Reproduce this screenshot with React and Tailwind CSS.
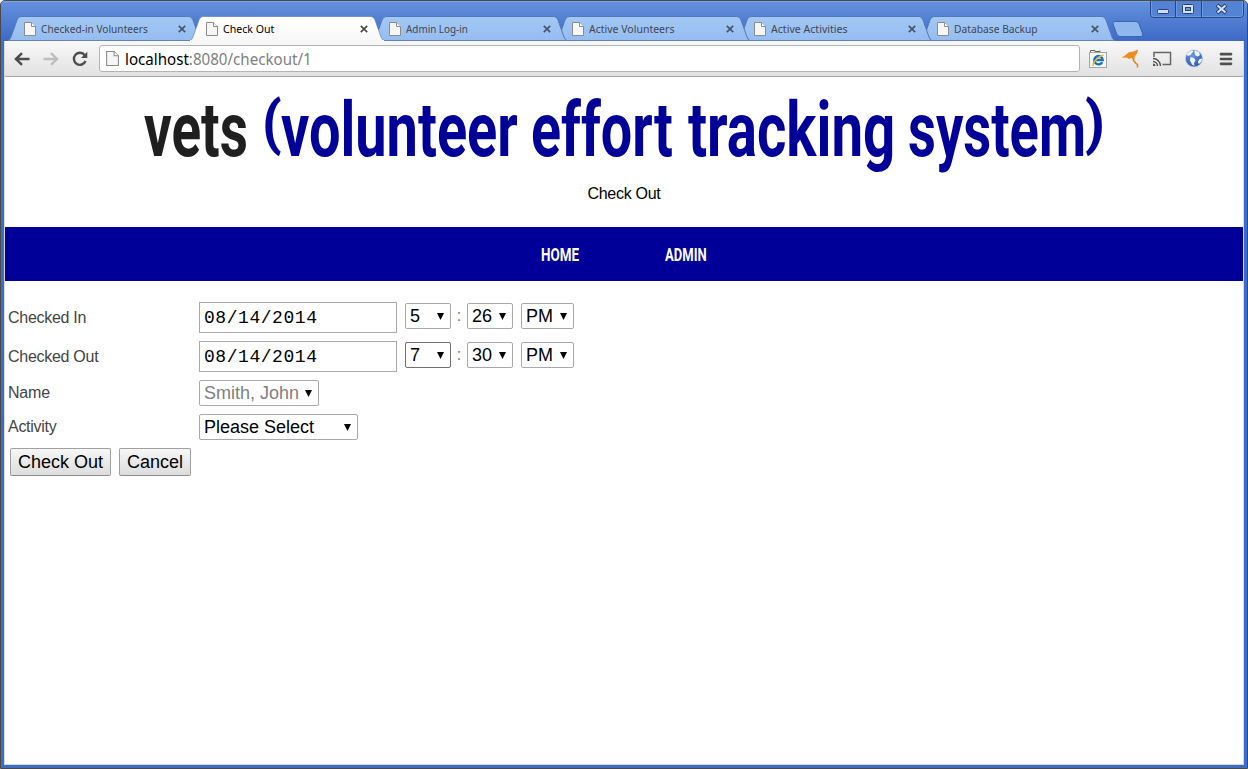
import { useLayoutEffect, useRef, useState } from "react";

// Condenses or widens a line of text so that it fills the width of its box.
function Fit({ className = "", children }) {
  const box = useRef(null);
  const text = useRef(null);
  const [scale, setScale] = useState(1);
  useLayoutEffect(() => {
    setScale(box.current.clientWidth / text.current.offsetWidth);
  }, []);
  return (
    <span ref={box} className={`block shrink-0 ${className}`}>
      <span ref={text} className="inline-block origin-left whitespace-nowrap" style={{ transform: `scaleX(${scale})` }}>
        {children}
      </span>
    </span>
  );
}

function PageIcon({ className = "" }) {
  return (
    <svg viewBox="0 0 12 14" className={`block shrink-0 ${className}`}>
      <path d="M.5.5h7l4 4v9H.5z" fill="#f6f6f6" stroke="#8b8b8b" />
      <path d="M7.5.5v4h4" fill="#fff" stroke="#8b8b8b" />
    </svg>
  );
}

const tabs = [
  { title: "Checked-in Volunteers", width: "w-[107px]", layer: "z-[6]" },
  { title: "Check Out", width: "w-[51px]", layer: "z-[10]", active: true },
  { title: "Admin Log-in", width: "w-[62px]", layer: "z-[5]" },
  { title: "Active Volunteers", width: "w-[85px]", layer: "z-[4]" },
  { title: "Active Activities", width: "w-[77px]", layer: "z-[3]" },
  { title: "Database Backup", width: "w-[84px]", layer: "z-[2]" },
];

function Tab({ title, width, layer, active }) {
  return (
    <div className={`relative -mr-[11.3px] grid h-[25px] w-[194px] shrink-0 ${layer}`}>
      <svg viewBox="0 0 194 25" className="col-start-1 row-start-1 h-[25px] w-[194px]">
        <defs>
          <linearGradient id="tabFill" x1="0" y1="0" x2="0" y2="1">
            <stop offset="0" stopColor="#a3c8f5" />
            <stop offset="1" stopColor="#96bcf0" />
          </linearGradient>
          <linearGradient id="tabActive" x1="0" y1="0" x2="0" y2="1">
            <stop offset="0" stopColor="#ffffff" />
            <stop offset="1" stopColor="#f8f8f8" />
          </linearGradient>
        </defs>
        <path
          d="M0 24.5Q2 24 3 21L9 4Q10.300 .5 13 .5H181Q183.500 .5 185 4L191 21Q192 24 194 24.500"
          fill={active ? "url(#tabActive)" : "url(#tabFill)"}
          stroke={active ? "#5575b0" : "#5478b8"}
          strokeWidth={active ? ".6" : "1"}
        />
        {active ? <path d="M0 24.5H194" stroke="#f8f8f8" /> : <path d="M0 24.500H194" stroke="#6385bd" />}
      </svg>
      <div className="col-start-1 row-start-1 flex items-center pl-4">
        <PageIcon className="h-[14px] w-[12px]" />
        <Fit className={`ml-[5px] font-['Noto_Sans',sans-serif] text-[11px] leading-[16px] ${width} ${active ? "text-black" : "text-[#404754]"}`}>
          {title}
        </Fit>
        <svg viewBox="0 0 8 8" className="mr-4 ml-auto size-2">
          <path d="M.8.8l6.400 6.400M7.200.8L.8 7.200" stroke={active ? "#4b4b4b" : "#46546a"} strokeWidth="1.700" />
        </svg>
      </div>
    </div>
  );
}

function WindowButtons() {
  return (
    <svg viewBox="0 0 94 18" className="h-[18px] w-[94px]">
      <path d="M.5 0V14Q.5 17.500 4 17.500H90Q93.500 17.500 93.500 14V0" fill="#5583d4" stroke="#24468d" />
      <path d="M1.500 1V14Q1.500 16.500 4 16.500H90Q92.500 16.500 92.500 14V1" fill="none" stroke="#7ba4e8" strokeWidth=".7" />
      <path d="M25.500 0V17M51.500 0V17" stroke="#24468d" />
      <path d="M26.500 1V16.500M52.500 1V16.500" stroke="#7ba4e8" strokeWidth=".6" />
      <rect x="7.500" y="9.500" width="11" height="4" rx="1" fill="#cfddf7" stroke="#24427f" />
      <rect x="32.500" y="4.500" width="11" height="9" rx="1" fill="#d5e2f8" stroke="#24427f" />
      <rect x="35.500" y="7.500" width="5" height="3" fill="#6d94dc" stroke="#24427f" />
      <path d="M67 5l9 8M76 5l-9 8" stroke="#24427f" strokeWidth="4" />
      <path d="M67.500 5.500l8 7M75.500 5.500l-8 7" stroke="#d5e2f8" strokeWidth="2" />
    </svg>
  );
}

function Toolbar() {
  return (
    <div className="flex h-9 shrink-0 items-center rounded-t-[3px] border-b border-[#a5a5a5] bg-linear-to-b from-[#f8f8f8] to-[#e2e2e2] pl-[9px]">
      <svg viewBox="0 0 16 14" className="h-[14px] w-4">
        <path d="M15.500 7H2.500M8 1.200L2 7l6 5.800" fill="none" stroke="#4d4d4d" strokeWidth="2.500" />
      </svg>
      <svg viewBox="0 0 16 14" className="ml-[13px] h-[14px] w-4">
        <path d="M.5 7h13M8 1.200L14 7l-6 5.800" fill="none" stroke="#bdbdbd" strokeWidth="2.300" />
      </svg>
      <svg viewBox="0 0 16 16" className="ml-[13px] size-4">
        <path d="M12.700 4.200A6 6 0 1 0 13.500 10" fill="none" stroke="#4d4d4d" strokeWidth="2.400" />
        <path d="M15.300.8V7H9z" fill="#4d4d4d" />
      </svg>
      <div className="ml-[11px] flex h-[27px] w-[981px] items-center rounded-[3px] border border-[#b4b4b4] bg-white pl-[6px]">
        <PageIcon className="h-[15px] w-[13px]" />
        <Fit className="ml-[6px] w-[187px] font-['Noto_Sans',sans-serif] text-[16px] leading-[24px] text-[#808080]">
          <span className="text-black">localhost</span>:8080/checkout/1
        </Fit>
      </div>
      <svg viewBox="0 0 20 20" className="ml-[8px] size-5">
        <path d="M2.500 3V1.500h4.500v1h5V1.500" fill="none" stroke="#666" />
        <rect x="1.500" y="3.500" width="17" height="15" fill="#f6f6f6" stroke="#a5a5a5" />
        <path d="M14.200 13.200A4.200 4.200 0 1 1 14.700 11H6.800" fill="none" stroke="#1272c4" strokeWidth="2.400" />
        <path d="M5.500 17C3.500 15.500 8.500 8 15.500 6" fill="none" stroke="#edb92c" strokeWidth="1.500" />
      </svg>
      <svg viewBox="0 0 19 20" className="ml-[13px] h-5 w-[19px]">
        <path d="M.5 8.500L3.500 6.800L8 3.300L12.500 2.600L17 .5L16.300 4L13.800 7.500L13.300 11.500L11 8.800L8 10L6 8.700z" fill="#ef8c20" />
        <path d="M11.500 7.500Q12 12 14.700 14.200Q17.500 15.500 16.300 18.500" fill="none" stroke="#e5851d" strokeWidth="1.500" />
      </svg>
      <svg viewBox="0 0 20 16" className="ml-[12px] h-4 w-5">
        <path d="M2 6V1.500H18.500V13.500H10.500" fill="none" stroke="#666" strokeWidth="1.500" />
        <path d="M1 7.500a7.500 7.500 0 0 1 7.500 7.500M1 10.500A4.500 4.500 0 0 1 5.500 15" fill="none" stroke="#555" strokeWidth="1.400" />
        <path d="M1 12.500a2.500 2.500 0 0 1 2.500 2.500H1z" fill="#555" />
      </svg>
      <svg viewBox="0 0 20 20" className="ml-[12px] size-5">
        <defs>
          <radialGradient id="globe" cx=".4" cy=".3" r=".7">
            <stop offset="0" stopColor="#7099da" />
            <stop offset="1" stopColor="#2c5cb0" />
          </radialGradient>
        </defs>
        <circle cx="10" cy="9.500" r="8.500" fill="url(#globe)" stroke="#b9c6dc" strokeWidth=".7" />
        <path d="M2.500 5.500Q5 2 8 1.500L9.500 2.500L7.500 4.500L6.500 6L4 7zM10.500 1.300L15 3L16 6L14 7.500L11.500 6.500L10.500 4zM6.500 8L10 9L11.500 11.500L10 14L10.500 17L8 15.500L6 11.500zM15.500 10L18.200 9.500L17.500 12.500L15 15L13.800 13z" fill="#eef3fa" />
      </svg>
      <svg viewBox="0 0 14 14" className="ml-[15px] h-[14px] w-[14px]">
        <path d="M2 2.200h10M2 7h10M2 11.800h10" stroke="#505050" strokeWidth="2.700" strokeLinecap="round" />
      </svg>
    </div>
  );
}

function Select({ value, className = "", strong }) {
  return (
    <button
      className={`flex h-[26px] shrink-0 items-center justify-between rounded-[2px] border bg-white pr-[6px] pl-1 font-['Liberation_Sans',Arial,sans-serif] text-[18px] leading-6 ${strong ? "border-[#707070]" : "border-[#a9a9a9]"} ${className}`}
    >
      {value}
      <svg viewBox="0 0 7 6" className="h-[7px] w-[7px]" preserveAspectRatio="none">
        <path d="M0 0h7L3.500 6z" fill="#000" />
      </svg>
    </button>
  );
}

function TimeRow({ label, date, hour, minute, strong }) {
  return (
    <div className="flex h-[31px]">
      <span className="w-[191px] pt-[4px] tracking-[-0.280px]">{label}</span>
      <input
        readOnly
        value={date}
        className="h-[31px] w-[198px] border border-[#a9a9a9] bg-white px-1 font-['Liberation_Mono','Courier_New',monospace] text-[18px] tracking-[0.550px] text-black"
      />
      <div className="ml-2 flex pt-px text-black">
        <Select value={hour} strong={strong} className="w-[46px]" />
        <span className="w-4 pt-px text-center text-[#777]">:</span>
        <Select value={minute} className="w-[46px]" />
        <Select value="PM" className="ml-2 w-[53px]" />
      </div>
    </div>
  );
}

function FormButton({ children, className = "" }) {
  return (
    <button
      className={`h-7 rounded-[2px] border border-[#a0a0a0] border-b-[#8d8d8d] bg-linear-to-b from-[#f6f6f6] to-[#dddddd] text-[18px] leading-[25px] text-black ${className}`}
    >
      {children}
    </button>
  );
}

export default function App() {
  return (
    <div className="flex h-[769px] w-[1248px] flex-col overflow-hidden rounded-t-[5px] border border-[#494949] bg-[#3f6dc6] font-['Liberation_Sans',Arial,sans-serif]">
      <header className="flex h-10 shrink-0 items-start border-t border-[#7ca4e6] bg-linear-to-b from-[#6391dc] to-[#3e69c5]">
        <div className="flex h-[39px] items-end pl-[6.500px]">
          {tabs.map((tab) => (
            <Tab key={tab.title} {...tab} />
          ))}
        </div>
        <svg viewBox="0 0 32 16" className="mt-[19px] ml-[8.600px] h-4 w-8">
          <path d="M3 .5H24Q26 .5 27 3L30.500 12.500Q31.500 15.500 29 15.500H8Q5.500 15.500 4.500 12.500L1 3Q.2.5 3 .5z" fill="#91b8ee" stroke="#3965b7" />
        </svg>
        <div className="-mt-0.5 ml-[6px]">
          <WindowButtons />
        </div>
      </header>

      <div className="mx-[3px] mb-[3px] flex min-h-0 grow flex-col overflow-hidden border border-t-0 border-[#d5d9d0] bg-white">
        <Toolbar />

        <div className="flex h-[150px] shrink-0 flex-col items-center pt-[8px]">
          <h1 className="flex h-[90px] w-full pl-[139px] font-[Roboto,sans-serif] text-[76px] leading-[90px] font-bold text-[#000099]">
            <Fit className="w-[104px] text-[#1f1f1f]">vets</Fit>
            <Fit className="-mt-[7px] ml-[14px] w-[20px] text-[59px] font-extrabold">(</Fit>
            <Fit className="-ml-[1px] w-[237px]">volunteer</Fit>
            <Fit className="ml-[13px] w-[142px]">effort</Fit>
            <Fit className="ml-[15px] w-[207px]">tracking</Fit>
            <Fit className="ml-[13px] w-[178px]">system</Fit>
            <Fit className="-mt-[7px] -ml-[1px] w-[20px] text-[59px] font-extrabold">)</Fit>
          </h1>
          <p className="mt-[7px] text-[16px] leading-6 tracking-[-0.280px] text-black">Check Out</p>
        </div>

        <nav className="flex h-[54px] shrink-0 items-center bg-[#000099] pl-[536px] font-[Roboto,sans-serif] text-[18px] font-bold text-white">
          <Fit className="w-[38px]">HOME</Fit>
          <Fit className="ml-[86px] w-[42px]">ADMIN</Fit>
        </nav>

        <form className="flex flex-col pt-[21px] pl-[3px] text-[16px] leading-6 text-[#444]">
          <TimeRow label="Checked In" date="08/14/2014" hour="5" minute="26" />
          <div className="mt-2">
            <TimeRow label="Checked Out" date="08/14/2014" hour="7" minute="30" strong />
          </div>
          <div className="mt-2 flex">
            <span className="w-[191px] pt-px tracking-[-0.200px]">Name</span>
            <Select value="Smith, John" className="w-[120px] text-[#808080]" />
          </div>
          <div className="mt-2 flex">
            <span className="w-[191px] pt-px tracking-[-0.280px]">Activity</span>
            <Select value="Please Select" className="w-[159px] text-black" />
          </div>
          <div className="mt-2 flex pl-[2px]">
            <FormButton className="w-[101px]">Check Out</FormButton>
            <FormButton className="ml-2 w-[72px]">Cancel</FormButton>
          </div>
        </form>
      </div>
    </div>
  );
}
